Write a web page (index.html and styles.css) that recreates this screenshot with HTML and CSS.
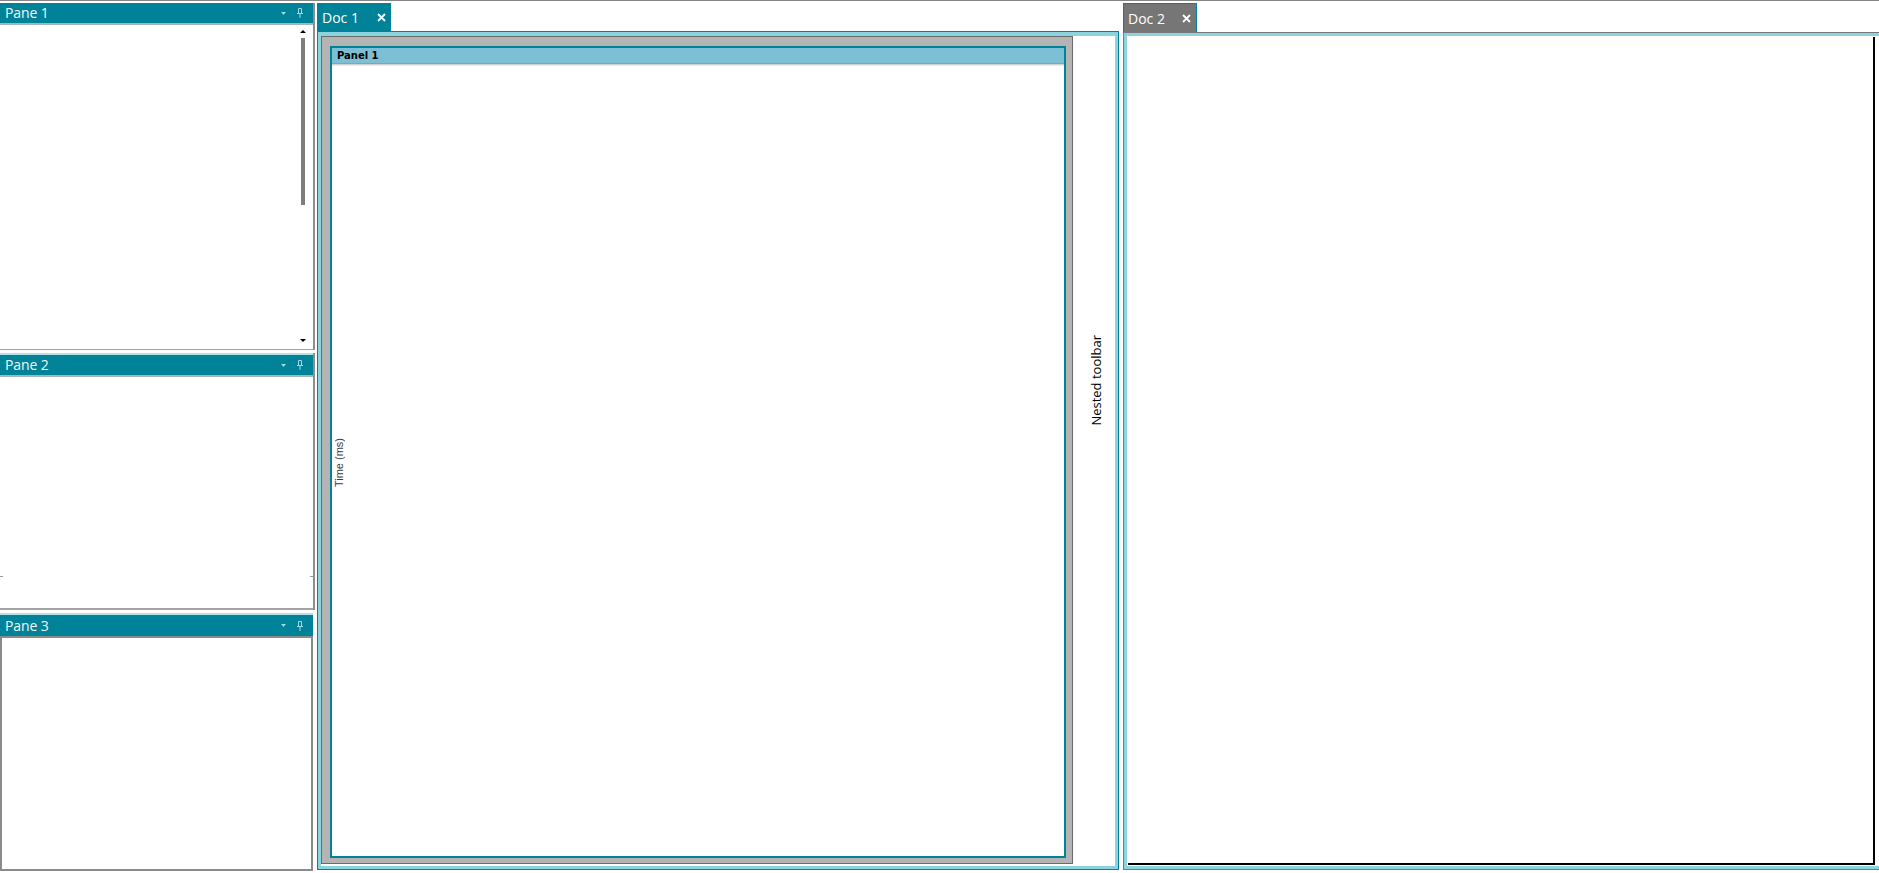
FILE: index.html
```html
<!DOCTYPE html>
<html lang="en">
<head>
    <meta charset="UTF-8">
    <meta name="viewport" content="width=device-width, initial-scale=1.0">
    <title>Docking Layout</title>
    <link rel="stylesheet" href="styles.css">
</head>
<body>
    <div class="workspace">
        <!-- Tool panes docked on the left -->
        <aside class="dock-side">
            <section class="pane pane-first">
                <header class="pane-head">
                    <span class="pane-title">Pane 1</span>
                    <span class="pane-tools">
                        <svg class="tool-menu" width="5" height="3" viewBox="0 0 5 3"><polygon points="0,0 5,0 2.5,3"/></svg>
                        <svg class="tool-pin" width="6" height="10" viewBox="0 0 6 10"><path d="M1.5 0.5h3v5h-3z M0 5.5h6 M3 6v4"/></svg>
                    </span>
                </header>
                <div class="pane-body">
                    <div class="scrollbar">
                        <div class="scroll-track">
                            <span class="arrow-up"></span>
                            <span class="thumb"></span>
                        </div>
                        <span class="arrow-down"></span>
                    </div>
                </div>
            </section>

            <section class="pane pane-next">
                <header class="pane-head">
                    <span class="pane-title">Pane 2</span>
                    <span class="pane-tools">
                        <svg class="tool-menu" width="5" height="3" viewBox="0 0 5 3"><polygon points="0,0 5,0 2.5,3"/></svg>
                        <svg class="tool-pin" width="6" height="10" viewBox="0 0 6 10"><path d="M1.5 0.5h3v5h-3z M0 5.5h6 M3 6v4"/></svg>
                    </span>
                </header>
                <div class="pane-body">
                    <div class="pane-ticks"><span></span><span></span></div>
                </div>
            </section>

            <section class="pane pane-next pane-last">
                <header class="pane-head">
                    <span class="pane-title">Pane 3</span>
                    <span class="pane-tools">
                        <svg class="tool-menu" width="5" height="3" viewBox="0 0 5 3"><polygon points="0,0 5,0 2.5,3"/></svg>
                        <svg class="tool-pin" width="6" height="10" viewBox="0 0 6 10"><path d="M1.5 0.5h3v5h-3z M0 5.5h6 M3 6v4"/></svg>
                    </span>
                </header>
                <div class="pane-body"></div>
            </section>
        </aside>

        <!-- Document groups -->
        <main class="docs">
            <div class="doc-group doc-group-main">
                <div class="tab-strip">
                    <div class="tab tab-active">
                        <span>Doc 1</span>
                        <svg class="tab-close" width="9" height="9" viewBox="0 0 9 9"><path d="M1 1L8 8M8 1L1 8"/></svg>
                    </div>
                </div>
                <div class="doc-frame">
                    <div class="doc-inner">
                        <div class="panel-host">
                            <div class="panel">
                                <div class="panel-head">Panel 1</div>
                                <div class="panel-body">
                                    <span class="axis-label">Time (ms)</span>
                                </div>
                            </div>
                        </div>
                        <div class="nested-toolbar">
                            <span>Nested toolbar</span>
                        </div>
                    </div>
                </div>
            </div>

            <div class="doc-group doc-group-side">
                <div class="tab-strip tab-strip-tall">
                    <div class="tab tab-idle">
                        <span>Doc 2</span>
                        <svg class="tab-close" width="9" height="9" viewBox="0 0 9 9"><path d="M1 1L8 8M8 1L1 8"/></svg>
                    </div>
                </div>
                <div class="doc-frame doc-frame-idle">
                    <div class="doc-inner doc-inner-idle">
                        <div class="doc-view"></div>
                    </div>
                </div>
            </div>
        </main>
    </div>
</body>
</html>
```

FILE: styles.css
```css
body {
    margin: 0;
    font-family: 'Open Sans', 'Noto Sans', sans-serif;
    background-color: #fff;
    color: #000;
    overflow: hidden;
}
.workspace {
    display: flex;
    height: 872px;
    border-top: 1px solid #858585;
}

/* left dock */
.dock-side {
    width: 315px;
    flex: none;
    display: flex;
    flex-direction: column;
    padding-top: 2px;
}
.pane {
    display: flex;
    flex-direction: column;
    box-sizing: border-box;
    border-right: 2px solid #8e8e8e;
}
.pane-first {
    height: 347px;
}
.pane-next {
    height: 257px;
    margin-top: 3px;
}
.pane-last {
    height: 258px;
    width: 313px;
    border-right: none;
}
.pane-head {
    height: 20px;
    width: 313px;
    flex: none;
    display: flex;
    align-items: center;
    justify-content: space-between;
    padding: 0 10px 0 5px;
    box-sizing: border-box;
    background-color: #008299;
    color: #f2f8f9;
    font-size: 14px;
}
.pane-next .pane-head {
    height: 22px;
    border-top: 2px solid #b5e2e8;
}
.pane-last .pane-head {
    height: 23px;
}
.pane-title {
    margin-top: -1px;
    letter-spacing: -0.1px;
}
.pane-tools {
    display: flex;
    align-items: center;
    gap: 11px;
}
.tool-menu {
    fill: #a6d6de;
}
.tool-pin {
    fill: none;
    stroke: #a6d6de;
    stroke-width: 1;
}
.pane-body {
    flex: 1;
    border-top: 2px solid #a4b8bb;
    border-bottom: 1px solid #a0a0a0;
    background-color: #fff;
    display: flex;
    justify-content: flex-end;
}
.pane-next .pane-body {
    border-bottom: 2px solid #a4a4a4;
    justify-content: stretch;
}
.pane-last .pane-body {
    border: 2px solid #8a8a8a;
}

/* scrollbar in the first pane */
.scrollbar {
    width: 6px;
    margin: 5px 7px 7px 0;
    display: flex;
    flex-direction: column;
    justify-content: space-between;
    align-items: center;
}
.scroll-track {
    display: flex;
    flex-direction: column;
    align-items: center;
}
.arrow-up {
    width: 0;
    height: 0;
    border-left: 3px solid transparent;
    border-right: 3px solid transparent;
    border-bottom: 3px solid #000;
}
.arrow-down {
    width: 0;
    height: 0;
    border-left: 3px solid transparent;
    border-right: 3px solid transparent;
    border-top: 3px solid #000;
}
.thumb {
    width: 4px;
    height: 167px;
    margin-top: 5px;
    background-color: #7d7d7d;
}
.pane-ticks {
    flex: 1;
    display: flex;
    justify-content: space-between;
    align-items: flex-start;
    padding-top: 199px;
}
.pane-ticks span {
    width: 3px;
    height: 1px;
    background-color: #9a9a9a;
}

/* documents */
.docs {
    display: flex;
    gap: 4px;
    padding: 2px 0 0 2px;
}
.doc-group {
    flex: none;
    display: flex;
    flex-direction: column;
}
.doc-group-main {
    width: 802px;
}
.doc-group-side {
    width: 800px;
}
.tab-strip {
    height: 28px;
    display: flex;
}
.tab-strip-tall {
    height: 29px;
}
.tab {
    width: 74px;
    display: flex;
    align-items: center;
    justify-content: space-between;
    padding: 0 5px;
    box-sizing: border-box;
    color: #fff;
    font-size: 14px;
}
.tab-active {
    background-color: #008299;
}
.tab-idle {
    background-color: #767676;
    border: 1px solid #008299;
    border-bottom: none;
    padding: 0 5px 0 4px;
}
.tab-close {
    fill: none;
    stroke: #fff;
    stroke-width: 1.8;
}
.doc-frame {
    height: 839px;
    box-sizing: border-box;
    border: 1px solid #008299;
}
.doc-frame-idle {
    height: 838px;
    border-color: #7a7a7a;
}
.doc-inner {
    height: 100%;
    box-sizing: border-box;
    border: 3px solid #8bd4de;
    border-top-width: 4px;
    padding-bottom: 2px;
    display: flex;
    background-color: #fff;
}
.doc-inner-idle {
    border-top-width: 3px;
    padding: 1px;
}

/* panel inside the first document */
.panel-host {
    width: 752px;
    flex: none;
    box-sizing: border-box;
    border: 1px solid #6b6b6b;
    background-color: #b4b4b4;
    padding: 9px 6px 5px 8px;
    display: flex;
}
.panel {
    flex: 1;
    display: flex;
    flex-direction: column;
    border: 2px solid #008299;
    background-color: #fff;
}
.panel-head {
    height: 15px;
    padding-left: 5px;
    background-color: #7dbfd5;
    border-bottom: 1px solid #9c9c9c;
    box-shadow: 0 1px 0 #d2d2d2, 0 2px 0 #ececec;
    font-family: 'DejaVu Sans', 'Liberation Sans', sans-serif;
    font-weight: bold;
    font-size: 10px;
    line-height: 15px;
}
.panel-body {
    flex: 1;
    display: flex;
    align-items: flex-start;
}
.axis-label {
    margin: 374px 0 0 3px;
    writing-mode: vertical-rl;
    transform: rotate(180deg);
    font-family: 'Liberation Sans', Arial, sans-serif;
    font-size: 11px;
    line-height: 9px;
    color: #3a3a4a;
}
.nested-toolbar {
    flex: 1;
    display: flex;
    justify-content: center;
    align-items: flex-start;
    padding: 299px 0 0 3px;
}
.nested-toolbar span {
    writing-mode: vertical-rl;
    transform: rotate(180deg);
    font-size: 13px;
    line-height: 16px;
}

/* second document */
.doc-view {
    width: 747px;
    height: 100%;
    box-sizing: border-box;
    border-right: 2px solid #000;
    border-bottom: 2px solid #000;
}
```
